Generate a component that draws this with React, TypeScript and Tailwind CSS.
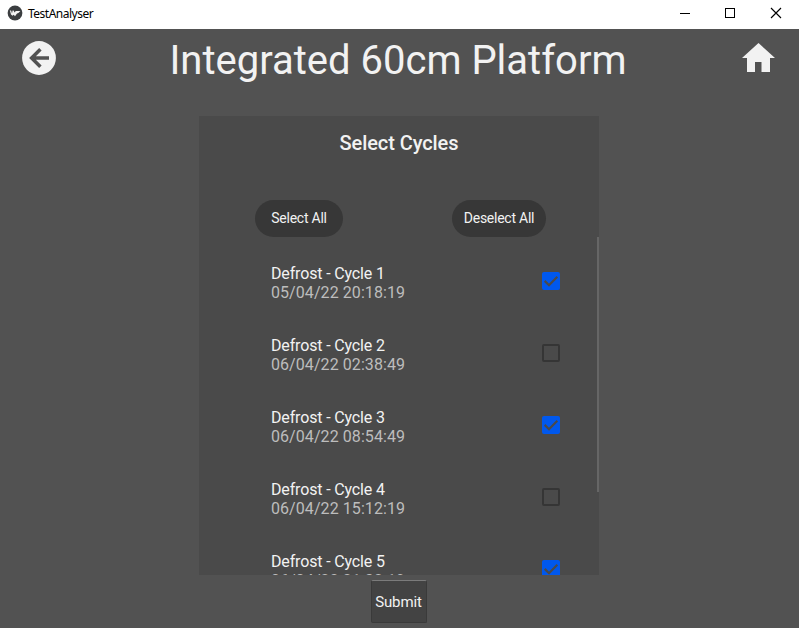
import React from "react";

type Cycle = { name: string; time: string; checked: boolean };

const cycles: Cycle[] = [
  { name: "Defrost - Cycle 1", time: "05/04/22 20:18:19", checked: true },
  { name: "Defrost - Cycle 2", time: "06/04/22 02:38:49", checked: false },
  { name: "Defrost - Cycle 3", time: "06/04/22 08:54:49", checked: true },
  { name: "Defrost - Cycle 4", time: "06/04/22 15:12:19", checked: false },
  { name: "Defrost - Cycle 5", time: "06/04/22 21:32:19", checked: true },
];

function TitleBar() {
  return (
    <div className="flex h-[29px] shrink-0 items-start bg-white pl-[7px] text-black">
      <svg className="mt-[5px] h-4 w-4" viewBox="0 0 16 16">
        <circle cx="8" cy="8" r="7.4" fill="#3b3e40" />
        <path d="M2.8 5.2 4.2 5.8 5 8.4 5.6 5.6 6.6 5.4 7.6 7.4 8.8 6l4.6 0-2 2-1.4.4-2 2.8-1.3-1.4-1.2 1-1.5-1.2z" fill="#f4f4f4" />
      </svg>
      <span className="ml-[5px] mt-[5px] font-['Noto_Sans','Open_Sans',sans-serif] text-[12px] leading-[17px] tracking-[-0.5px]">TestAnalyser</span>
      <div className="ml-auto flex">
        <svg className="h-[29px] w-[46px]" viewBox="0 0 46 29" shapeRendering="crispEdges">
          <path d="M18 13h10v1H18z" />
        </svg>
        <svg className="h-[29px] w-[45px]" viewBox="0 0 45 29" fill="none" stroke="#000" shapeRendering="crispEdges">
          <path d="M17.5 8.5h9v9h-9z" />
        </svg>
        <svg className="h-[29px] w-[46px]" viewBox="0 0 46 29" fill="none" stroke="#000" strokeWidth="1.15">
          <path d="m18 8 10 10M28 8 18 18" />
        </svg>
      </div>
    </div>
  );
}

function Checkbox({ checked }: { checked: boolean }) {
  return (
    <svg className="h-[18px] w-[18px]" viewBox="0 0 18 18" fill="none">
      {checked ? (
        <>
          <rect width="18" height="18" rx="2" fill="#0058ee" />
          <path d="m2.7 8.9 4.3 4.3 8.3-8.5" stroke="#4a4a4a" strokeWidth="2.2" />
        </>
      ) : (
        <rect x="1" y="1" width="16" height="16" rx="1" stroke="#353535" strokeWidth="2" />
      )}
    </svg>
  );
}

export default function App() {
  return (
    <div className="flex h-[628px] w-[799px] flex-col overflow-hidden bg-[#525252] font-['Roboto',sans-serif] text-[#f2f2f2]">
      <TitleBar />
      <header className="flex h-[87px] shrink-0 items-start justify-between pl-[22px] pr-6">
        <svg className="mt-3 h-[34px] w-[34px]" viewBox="0 0 34 34">
          <circle cx="17" cy="17" r="16.9" fill="#f2f2f2" />
          <path d="M27 17H10M18.4 8.2 9.6 17l8.8 8.8" fill="none" stroke="#525252" strokeWidth="3.5" />
        </svg>
        <h1 className="mr-[2px] mt-2 whitespace-nowrap text-[40px] leading-[47px]">Integrated 60cm Platform</h1>
        <svg className="mt-[14px] h-[29px] w-[33px]" viewBox="0 0 33 29" fill="#f2f2f2">
          <path d="M16.5 0 33 15h-5v14h-8.5V19h-6.5v10H5V15H0z" />
        </svg>
      </header>
      <main className="ml-[199px] flex h-[459px] w-[400px] shrink-0 flex-col overflow-hidden bg-[#4a4a4a]">
        <h2 className="mt-[15px] text-center text-[20px] font-medium leading-6 tracking-[-0.08px]">Select Cycles</h2>
        <div className="mt-[45px] flex h-[37px] shrink-0 justify-between pl-14 pr-[53px] text-[14px] tracking-[-0.25px]">
          <button className="h-[37px] w-[88px] rounded-full bg-[#373737]">Select All</button>
          <button className="h-[37px] w-[94px] rounded-full bg-[#373737]">Deselect All</button>
        </div>
        <div className="flex h-[338px] shrink-0 overflow-hidden">
          <ul className="flex-1 pt-2">
            {cycles.map((c) => (
              <li key={c.name} className="flex h-[72px] items-center justify-between pl-[72px] pr-[37px]">
                <div className="pt-[3px] text-[16px] leading-[19px]">
                  <p className="tracking-[-0.15px]">{c.name}</p>
                  <p className="tracking-[0.07px] text-[#bdbdbd]">{c.time}</p>
                </div>
                <Checkbox checked={c.checked} />
              </li>
            ))}
          </ul>
          <div className="h-[255px] w-[2px] bg-[#666666]" />
        </div>
      </main>
      <button className="ml-[371px] mt-[5px] h-[43px] w-14 shrink-0 rounded-[2px] border border-[#3a3a3a] border-t-[#7b7b7b] bg-[#434343] pr-px pt-px text-[15px] tracking-[-0.1px]">Submit</button>
    </div>
  );
}
